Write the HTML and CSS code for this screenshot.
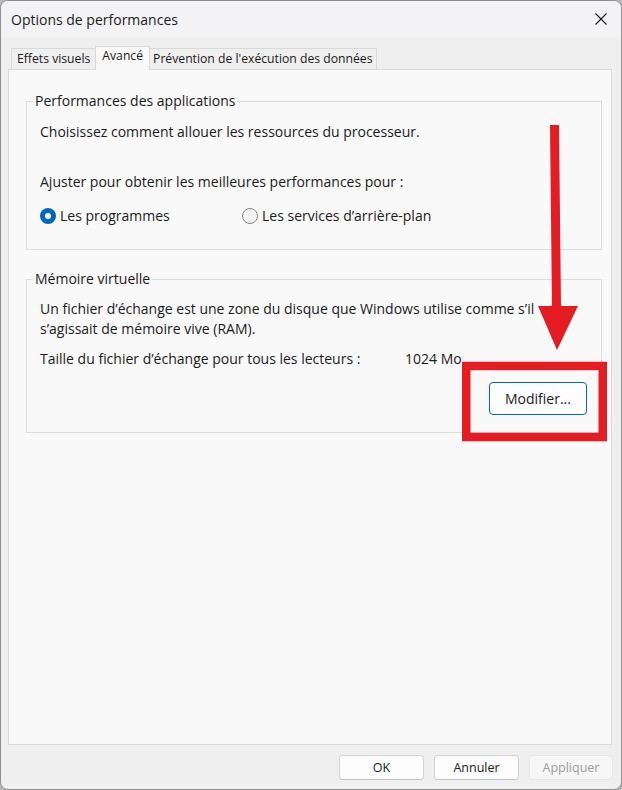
FILE: index.html
```html
<!DOCTYPE html>
<html lang="fr">
<head>
<meta charset="utf-8">
<title>Options de performances</title>
<link rel="stylesheet" href="styles.css">
</head>
<body>
<div class="window">
  <header class="titlebar">
    <span class="title">Options de performances</span>
    <span class="close" aria-label="Fermer">
      <svg width="12" height="12" viewBox="0 0 12 12"><path d="M0.5 0.5 L11.5 11.5 M11.5 0.5 L0.5 11.5" stroke="#1a1a1a" stroke-width="1.1" fill="none"/></svg>
    </span>
  </header>
  <main class="content">
    <nav class="tabs">
      <div class="tab tab-first">Effets visuels</div>
      <div class="tab active">Avancé</div>
      <div class="tab tab-last">Prévention de l'exécution des données</div>
    </nav>
    <section class="panel">
      <fieldset class="group">
        <legend>Performances des applications</legend>
        <p class="line first">Choisissez comment allouer les ressources du processeur.</p>
        <p class="line gap-lg">Ajuster pour obtenir les meilleures performances pour :</p>
        <div class="radios">
          <label class="radio"><span class="dot checked"></span>Les programmes</label>
          <label class="radio"><span class="dot"></span>Les services d’arrière-plan</label>
        </div>
      </fieldset>
      <fieldset class="group group-mem">
        <legend>Mémoire virtuelle</legend>
        <p class="line first">Un fichier d’échange est une zone du disque que Windows utilise comme s’il<br>s’agissait de mémoire vive (RAM).</p>
        <div class="line size-row">
          <span class="size-label">Taille du fichier d’échange pour tous les lecteurs :</span>
          <span>1024 Mo</span>
        </div>
        <div class="action-row">
          <button class="btn-primary">Modifier...</button>
        </div>
      </fieldset>
    </section>
  </main>
  <footer class="footer">
    <button class="btn">OK</button>
    <button class="btn">Annuler</button>
    <button class="btn disabled">Appliquer</button>
  </footer>
</div>
<svg class="annot" width="622" height="790" viewBox="0 0 622 790">
  <polygon points="550,125 559,125 561,308 552,308" fill="#e51c22"/>
  <polygon points="538,306 578,306 557,350" fill="#e51c22"/>
  <rect x="466.25" y="366" width="136.5" height="71" fill="none" stroke="#e51c22" stroke-width="8.5"/>
</svg>
</body>
</html>
```

FILE: styles.css
```css
* { box-sizing: border-box; }
html, body { margin: 0; padding: 0; }
body {
  position: relative;
  width: 622px;
  height: 790px;
  background: #b8b8b8;
  font-family: "Open Sans", "Noto Sans", sans-serif;
  color: #1a1a1a;
}
.window {
  width: 622px;
  height: 790px;
  border: 1px solid #8f8f8f;
  border-radius: 8px;
  overflow: hidden;
  display: flex;
  flex-direction: column;
  background: #efefef;
}
.titlebar {
  flex: none;
  height: 36px;
  display: flex;
  align-items: center;
  justify-content: space-between;
  padding: 0 14px 0 10px;
  background: #f3f3f5;
}
.title { font-size: 14px; }
.close { display: flex; width: 12px; height: 12px; }

.content {
  flex: 1;
  display: flex;
  flex-direction: column;
  padding: 9px 9px 0 7px;
}
.tabs {
  position: relative;
  z-index: 1;
  display: flex;
  align-items: flex-end;
  height: 24px;
  margin: 0 0 -1px 3px;
}
.tab {
  height: 21px;
  margin-bottom: 1px;
  padding: 0 4px;
  border: 1px solid #d9d9d9;
  border-bottom: 0;
  font-size: 12.2px;
  line-height: 20px;
  background: #efefef;
  white-space: nowrap;
}
.tab-first { padding: 0 5px; }
.tab-last { padding: 0 3px; }
.tab + .tab { margin-left: -1px; }
.tab.active {
  height: 24px;
  margin-bottom: 0;
  padding: 0 6px;
  background: #f9f9f9;
  line-height: 18px;
}
.panel {
  flex: 1;
  background: #f9f9f9;
  border: 1px solid #d9d9d9;
  padding: 21px 9px 0 17px;
}
.group {
  margin: 0;
  min-width: 0;
  padding: 0 13px 23px 13px;
  border: 1px solid #dcdcdc;
}
.group legend {
  padding: 0 2px;
  margin-left: -7px;
  font-size: 14px;
  line-height: 20px;
}
.group-mem { margin-top: 19px; padding-bottom: 17px; }
.line {
  margin: 0;
  font-size: 14px;
  line-height: 20px;
}
.first { margin-top: 11px; }
.group-mem .first { margin-top: 10px; }
.gap-lg { margin-top: 30px; }
.radios { display: flex; margin-top: 14px; }
.radio {
  display: flex;
  align-items: center;
  gap: 4px;
  font-size: 14px;
  line-height: 20px;
}
.radio:first-child { width: 202px; }
.dot {
  width: 16px;
  height: 16px;
  border-radius: 50%;
  border: 1px solid #858585;
  background: #f4f4f4;
}
.dot.checked {
  border: 0;
  background: #0067c0;
  display: flex;
  align-items: center;
  justify-content: center;
}
.dot.checked::after {
  content: "";
  width: 6px;
  height: 6px;
  border-radius: 50%;
  background: #fff;
}
.size-row { display: flex; margin-top: 10px; }
.size-label { width: 365px; }
.action-row { display: flex; justify-content: flex-end; margin-top: 13px; margin-right: 1px; }
.btn-primary {
  width: 98px;
  height: 33px;
  border: 1px solid #0067c0;
  border-radius: 4px;
  background: #fdfdfd;
  font-family: inherit;
  font-size: 14px;
  color: #1a1a1a;
  padding: 0;
}
.footer {
  flex: none;
  display: flex;
  justify-content: flex-end;
  gap: 10px;
  padding: 10px 8px 9px 0;
}
.btn {
  width: 85px;
  height: 25px;
  border: 1px solid #d3d3d3;
  border-bottom-color: #c4c4c4;
  border-radius: 4px;
  background: #fdfdfd;
  font-family: inherit;
  font-size: 12.5px;
  color: #1a1a1a;
  padding: 0;
}
.btn.disabled {
  width: 84px;
  background: #f6f6f6;
  border-color: #e6e6e6;
  color: #9d9d9d;
}
.annot {
  position: absolute;
  top: 0;
  left: 0;
  pointer-events: none;
}
```
